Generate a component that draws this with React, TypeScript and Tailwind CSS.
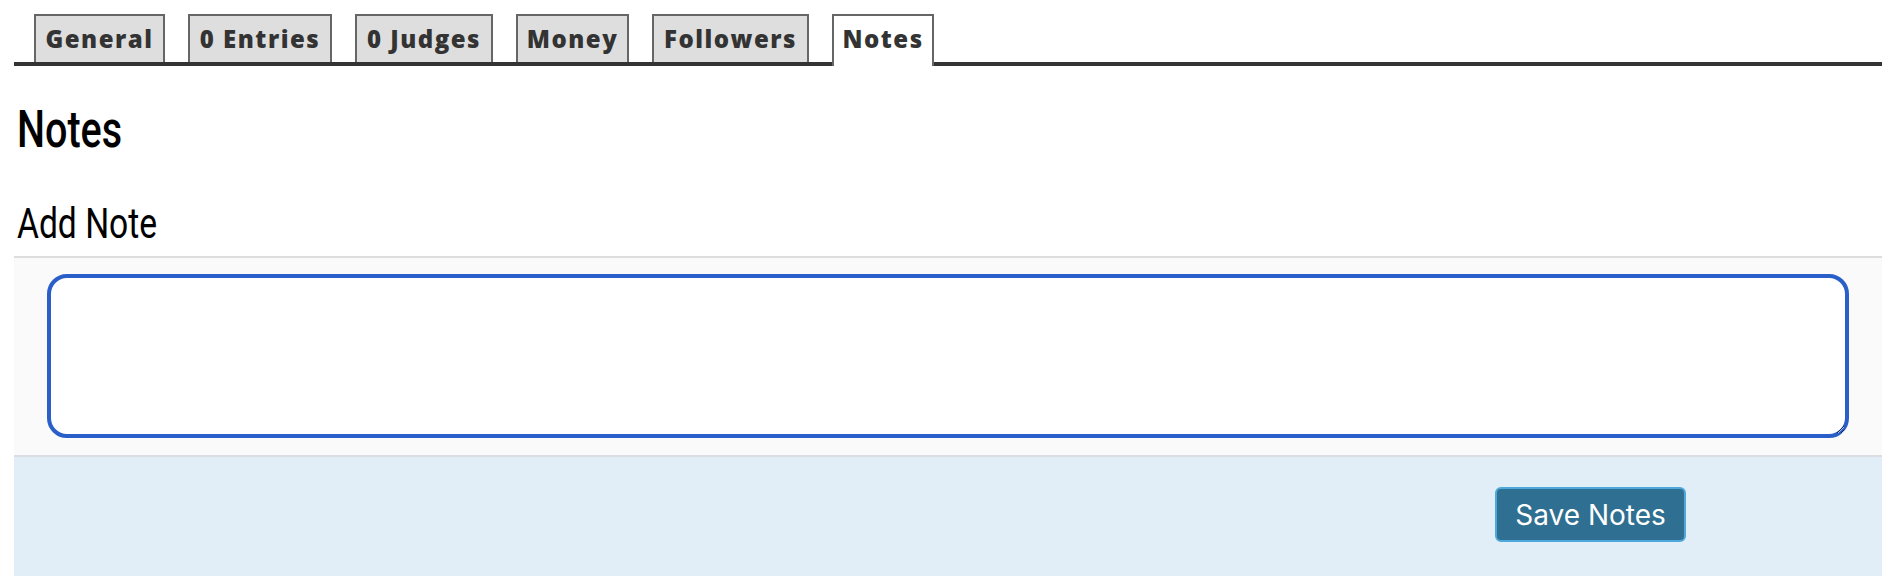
import React, { useState } from 'react';

const tabs = [
  { label: 'General', width: 'w-[131px]' },
  { label: '0 Entries', width: 'w-[144px]' },
  { label: '0 Judges', width: 'w-[138px]' },
  { label: 'Money', width: 'w-[113px]' },
  { label: 'Followers', width: 'w-[157px]' },
  { label: 'Notes', width: 'w-[102px]' },
];

export default function App() {
  const [active, setActive] = useState('Notes');
  const [note, setNote] = useState('');

  return (
    <div className="min-h-[576px] bg-white pl-[14px] pr-[10px]">
      {/* Tab strip */}
      <div className="flex h-[66px] items-end gap-[23px] border-b-4 border-[#333] pl-[20px]">
        {tabs.map((t) => (
          <button
            key={t.label}
            onClick={() => setActive(t.label)}
            className={cn(
              "flex items-center justify-center border-2 border-b-0 border-[#666] font-['Open_Sans',sans-serif] text-[24px] font-extrabold tracking-[1.5px] text-[#333]",
              t.width,
              active === t.label ? 'relative -mb-1 h-[52px] bg-white pb-[4px]' : 'h-[48px] bg-[#dedede]'
            )}
          >
            {t.label}
          </button>
        ))}
      </div>

      <h1 className="mt-[38px] h-[52px] pl-[3px] font-['Roboto',sans-serif] text-[52px] leading-[52px] font-medium text-black">
        <span className="inline-block origin-left scale-x-[0.76]">Notes</span>
      </h1>

      <h2 className="mt-[47px] h-[41px] pl-[3px] font-['Roboto',sans-serif] text-[42px] leading-[41px] font-normal text-black">
        <span className="inline-block origin-left scale-x-[0.8]">Add Note</span>
      </h2>

      <div className="mt-[12px] border-t-2 border-[#dddddd] bg-[#fafafa] px-[33px] pt-[16px] pb-[17px]">
        <textarea
          value={note}
          onChange={(e) => setNote(e.target.value)}
          className="block h-[164px] w-full rounded-[20px] border-4 border-[#2a5ec8] bg-white p-3 outline-none"
        />
      </div>

      <div className="flex h-[122px] justify-end border-t-2 border-[#dcdde2] bg-[#e1eef7] pt-[30px] pr-[196px]">
        <button className="h-[55px] w-[191px] rounded-[6px] border-2 border-[#4fa8db] bg-[#2f6f91] font-['Inter',sans-serif] text-[28px] text-white">
          Save Notes
        </button>
      </div>
    </div>
  );
}

function cn(...classes: string[]) {
  return classes.filter(Boolean).join(' ');
}
